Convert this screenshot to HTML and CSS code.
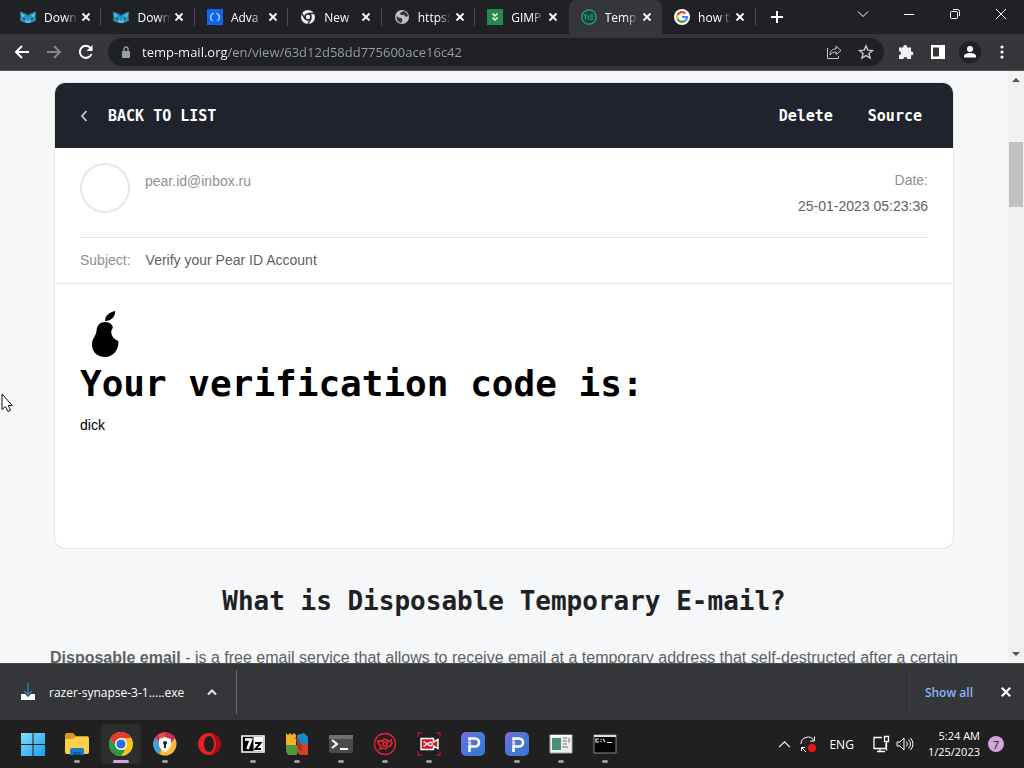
FILE: index.html
```html
<!DOCTYPE html>
<html lang="en">
<head>
    <meta charset="UTF-8">
    <meta name="viewport" content="width=device-width, initial-scale=1.0">
    <title>Temp Mail - Verify your Pear ID Account</title>
    <link rel="stylesheet" href="styles.css">
</head>
<body>
    <!-- Shared icons -->
    <svg class="sprite" aria-hidden="true">
        <symbol id="x" viewBox="0 0 10 10"><path d="M1.5 1.5l7 7m0-7l-7 7" stroke="currentColor" stroke-width="1.8" fill="none"/></symbol>
        <symbol id="panda" viewBox="0 0 16 16">
            <path d="M0 2.500l4 1.500 2 1h4l2-1 4-1.500-.5 6 .5 3-4 2H4l-4-2 .5-3z" fill="#2595bd"/>
            <path d="M1 4l4 3-3 1zm14 0l-4 3 3 1zM5 9l3 4 3-4-1 5H6z" fill="#66c8e6"/>
            <path d="M3 9l3 1-2 1zm10 0l-3 1 2 1zM6 5l2 2 2-2z" fill="#153d50"/>
        </symbol>
        <symbol id="p-app" viewBox="0 0 24 24">
            <defs><linearGradient id="pg" x1="0" y1="0" x2="1" y2="1"><stop offset="0" stop-color="#7b6bdc"/><stop offset=".5" stop-color="#4878da"/><stop offset="1" stop-color="#2f78d0"/></linearGradient></defs>
            <rect width="24" height="24" rx="5" fill="url(#pg)"/>
            <path d="M8.500 20V6.500H14a4 4 0 0 1 0 8H9" stroke="#fff" stroke-width="2.600" fill="none"/>
            <path d="M6 9h4M6 12h3" stroke="#4c78d8" stroke-width="1"/>
        </symbol>
    </svg>

    <header class="tabbar">
        <div class="tabs">
            <div class="tab">
                <svg class="favicon"><use href="#panda"/></svg>
                <button class="tab-title">Down</button>
                <button class="tab-close" aria-label="Close tab"><svg><use href="#x"/></svg></button>
            </div>
            <div class="tab">
                <svg class="favicon"><use href="#panda"/></svg>
                <button class="tab-title">Down</button>
                <button class="tab-close" aria-label="Close tab"><svg><use href="#x"/></svg></button>
            </div>
            <div class="tab">
                <svg class="favicon" viewBox="0 0 16 16"><rect width="16" height="16" fill="#1662f0"/><path d="M6.500 4Q1 8 5.500 12M9.500 4Q15 8 10.500 12" stroke="#b8e2ff" stroke-width="1.300" fill="none"/></svg>
                <button class="tab-title">Adva</button>
                <button class="tab-close" aria-label="Close tab"><svg><use href="#x"/></svg></button>
            </div>
            <div class="tab">
                <svg class="favicon" viewBox="0 0 16 16"><circle cx="8" cy="8" r="7" fill="#f1f1f1"/><path d="M8 4.500h6.500M5 9.800L1.800 4.300M11 9.800L7.800 15" stroke="#202124" stroke-width="1.300"/><circle cx="8" cy="8" r="3" fill="#f1f1f1" stroke="#202124" stroke-width="1.500"/></svg>
                <button class="tab-title">New</button>
                <button class="tab-close" aria-label="Close tab"><svg><use href="#x"/></svg></button>
            </div>
            <div class="tab">
                <svg class="favicon" viewBox="0 0 16 16"><circle cx="8" cy="8" r="7" fill="#bdc1c6"/><path d="M2.500 7l3 2h2l1 2-1 3c-4-1-5-3.500-5-7zM7 3l3-1c2 1 4 3 4 5l-2 1-2-2H7L6 5z" fill="#34363a"/></svg>
                <button class="tab-title">https:</button>
                <button class="tab-close" aria-label="Close tab"><svg><use href="#x"/></svg></button>
            </div>
            <div class="tab">
                <svg class="favicon" viewBox="0 0 16 16"><rect width="16" height="16" fill="#258a4d"/><path d="M5.500 4.500L8 7l2.500-2.500M5.500 8.500L8 11l2.500-2.500" stroke="#fff" stroke-width="1.500" fill="none"/></svg>
                <button class="tab-title">GIMP</button>
                <button class="tab-close" aria-label="Close tab"><svg><use href="#x"/></svg></button>
            </div>
            <div class="tab tab-active">
                <svg class="favicon" viewBox="0 0 16 16"><circle cx="8" cy="8" r="7.200" fill="#20403f" stroke="#1fae92" stroke-width="1.200"/><path d="M3 6h3M4.500 6v4.500M7.500 10.500v-4M9 8h3M9 6h3M9 10.500h3" stroke="#1fae92" stroke-width="1.200"/></svg>
                <button class="tab-title">Temp</button>
                <button class="tab-close" aria-label="Close tab"><svg><use href="#x"/></svg></button>
            </div>
            <div class="tab">
                <svg class="favicon" viewBox="0 0 16 16"><circle cx="8" cy="8" r="8" fill="#fff"/><g fill="none" stroke-width="2.200"><path d="M11.500 4.500A5 5 0 0 0 3.500 6" stroke="#ea4335"/><path d="M3.500 6a5 5 0 0 0 0 4" stroke="#fbbc05"/><path d="M3.500 10a5 5 0 0 0 8 1.500" stroke="#34a853"/><path d="M11.500 11.500A5 5 0 0 0 13 8H8" stroke="#4285f4"/></g></svg>
                <button class="tab-title">how t</button>
                <button class="tab-close" aria-label="Close tab"><svg><use href="#x"/></svg></button>
            </div>
        </div>
        <button class="new-tab" aria-label="New tab"><svg viewBox="0 0 12 12"><path d="M6 0v12M0 6h12" stroke="#fff" stroke-width="2"/></svg></button>
        <div class="window-buttons">
            <button aria-label="Search tabs"><svg viewBox="0 0 12 12"><path d="M1 3.500l5 5 5-5"/></svg></button>
            <button aria-label="Minimize"><svg viewBox="0 0 12 12"><path d="M1 6.500h10"/></svg></button>
            <button aria-label="Restore"><svg viewBox="0 0 12 12"><rect x="1.500" y="3.500" width="7" height="7" rx="1"/><path d="M4 1.500h4.500a2 2 0 0 1 2 2V8"/></svg></button>
            <button aria-label="Close"><svg viewBox="0 0 12 12"><path d="M1 1l10 10m0-10L1 11"/></svg></button>
        </div>
    </header>

    <nav class="toolbar">
        <button class="nav-button" aria-label="Back"><svg viewBox="0 0 16 16"><path d="M15 8H2m6-6L2 8l6 6"/></svg></button>
        <button class="nav-button disabled" aria-label="Forward"><svg viewBox="0 0 16 16"><path d="M1 8h13M8 2l6 6-6 6"/></svg></button>
        <button class="nav-button" aria-label="Reload"><svg viewBox="0 0 16 16"><path d="M13.500 10A6 6 0 1 1 12.500 4"/><path d="M14.500 1v6h-6z" fill="#fff" stroke="none"/></svg></button>
        <div class="omnibox">
            <svg class="lock" viewBox="0 0 10 12"><rect x="1" y="5" width="8" height="7" rx="1" fill="#9aa0a6"/><path d="M3 5V3a2 2 0 0 1 4 0v2" stroke="#9aa0a6" stroke-width="1.300" fill="none"/></svg>
            <input class="url" type="text" aria-label="Address" value="temp-mail.org/en/view/63d12d58dd775600ace16c42">
            <button aria-label="Share"><svg viewBox="0 0 16 16"><path d="M1.500 4v10.500h11V12M4 11c0-4 2-6 6-6V2l5 4.500-5 4V8c-3 0-4.500 1-6 3z"/></svg></button>
            <button aria-label="Bookmark"><svg viewBox="0 0 16 16"><path d="M8 1.800l1.800 4.300 4.700.4-3.600 3 1.200 4.600L8 11.600l-4.100 2.500 1.200-4.600-3.600-3 4.700-.4z" stroke-width="1.400"/></svg></button>
        </div>
        <div class="toolbar-end">
            <button aria-label="Extensions"><svg viewBox="0 0 16 16"><path d="M1 3.500h4.200V3a2 2 0 0 1 4 0v.5H13v4h.5a1.900 1.900 0 0 1 0 3.800H13V15H9.200v-.5a1.900 1.900 0 0 0-3.700 0v.5H1v-4h.5a1.900 1.900 0 0 0 0-3.700H1z" fill="#f1f3f4"/></svg></button>
            <button aria-label="Side panel"><svg viewBox="0 0 16 16"><path d="M1 1h14v14H1zM3 3.500v9h6v-9z" fill="#fff" fill-rule="evenodd"/></svg></button>
            <button class="profile" aria-label="Profile"><svg viewBox="0 0 16 16"><circle cx="8" cy="5" r="3" fill="#fff"/><path d="M2 13.500V12c0-2 3.500-3 6-3s6 1 6 3v1.500z" fill="#fff"/></svg></button>
            <button aria-label="Menu"><svg viewBox="0 0 16 16"><g fill="#fff"><circle cx="8" cy="3" r="1.600"/><circle cx="8" cy="8" r="1.600"/><circle cx="8" cy="13" r="1.600"/></g></svg></button>
        </div>
    </nav>

    <div class="viewport">
        <main class="page">
            <article class="mail">
                <div class="mail-bar">
                    <a class="back" href="#"><svg viewBox="0 0 8 12"><path d="M6.500 1L2 6l4.500 5" stroke="#c8cad0" stroke-width="1.800" fill="none"/></svg>BACK TO LIST</a>
                    <div class="mail-actions">
                        <a href="#">Delete</a>
                        <a href="#">Source</a>
                    </div>
                </div>
                <div class="mail-from">
                    <span class="avatar"></span>
                    <span class="sender">pear.id@inbox.ru</span>
                    <div class="date"><span class="muted">Date:</span><span>25-01-2023 05:23:36</span></div>
                </div>
                <div class="mail-subject"><span class="muted">Subject:</span><span>Verify your Pear ID Account</span></div>
                <div class="mail-body">
                    <svg class="pear" viewBox="0 0 50 50"><path d="M25 12c5 0 8 3 7.800 6-3 3-2 10 5.600 13C39 40 33 47 25 47S11.500 41 12 34c.3-6 4-8 4.500-13C17 15 20 12 25 12z"/><path d="M25 11C25 5 30 2 35 1c1 5-4 10-10 10z"/></svg>
                    <h1>Your verification code is:</h1>
                    <p>dick</p>
                </div>
            </article>
            <h2>What is Disposable Temporary E-mail?</h2>
            <p class="intro"><b>Disposable email</b> - is a free email service that allows to receive email at a temporary address that self-destructed after a certain</p>
        </main>
        <div class="scrollbar">
            <svg viewBox="0 0 8 4"><path d="M0 4l4-4 4 4z"/></svg>
            <div class="track"><div class="thumb"></div></div>
            <svg viewBox="0 0 8 4"><path d="M0 0l4 4 4-4z"/></svg>
        </div>
        <svg class="cursor" viewBox="0 0 12 20"><path d="M1.500 1v15.500l3.500-3 2.500 5 2.500-1.200L7.800 12.500h4z" fill="#fff" stroke="#111" stroke-width="1"/></svg>
    </div>

    <div class="shelf">
        <button class="download">
            <svg class="download-icon" viewBox="0 0 16 18"><path d="M1 11h4l3 3 3-3h4v6H1z" fill="#fff"/><path d="M8 0v12M4 8l4 4 4-4" stroke="#28849c" stroke-width="1.500" fill="none"/></svg>
            razer-synapse-3-1.....exe
        </button>
        <button class="download-menu" aria-label="Download options"><svg viewBox="0 0 12 12"><path d="M2 8.500l4-4 4 4" stroke="#e8eaed" stroke-width="2" fill="none"/></svg></button>
        <a class="show-all" href="#">Show all</a>
        <button class="shelf-close" aria-label="Close downloads"><svg><use href="#x"/></svg></button>
    </div>

    <footer class="taskbar">
        <div class="apps">
            <button aria-label="Start"><svg viewBox="0 0 24 24"><defs><linearGradient id="win" x1="0" y1="0" x2="1" y2="1"><stop offset="0" stop-color="#86dcfb"/><stop offset="1" stop-color="#16a0ee"/></linearGradient></defs><path d="M0 1h11.500v11H0zM12.500 1H24v11H12.500zM0 13h11.500v11H0zM12.500 13H24v11H12.500z" fill="url(#win)"/></svg></button>
            <button class="running" aria-label="File Explorer"><svg viewBox="0 0 24 24"><path d="M0 3a2 2 0 0 1 2-2h6l3 3h11a2 2 0 0 1 2 2v4H0z" fill="#d99a18"/><path d="M0 7h8l2-2h12a2 2 0 0 1 2 2v13a2 2 0 0 1-2 2H2a2 2 0 0 1-2-2z" fill="#fbcf4b"/><path d="M5 23v-5a2 2 0 0 1 2-2h10a2 2 0 0 1 2 2v5z" fill="#1c79c7"/><path d="M8 20h8v3H8z" fill="#125996"/></svg></button>
            <button class="running current" aria-label="Chrome"><svg viewBox="0 0 24 24"><circle cx="12" cy="12" r="12" fill="#fbc116"/><path d="M1.600 6A12 12 0 0 1 22.400 6H12L7 15z" fill="#e33b2e"/><path d="M1.600 6L7 15l5 3h4l-4 6A12 12 0 0 1 1.600 6z" fill="#259b48"/><circle cx="12" cy="12" r="6" fill="#fff"/><circle cx="12" cy="12" r="4.600" fill="#2872e0"/></svg></button>
            <button class="running" aria-label="Secure browser"><svg viewBox="0 0 24 24"><circle cx="12" cy="12" r="11.500" fill="#f5bd37"/><path d="M2 6A11.500 11.500 0 0 1 22 6l-5 6H7z" fill="#cf285c"/><path d="M2 6a11.500 11.500 0 0 0 5 16.500L9 12z" fill="#42a3e2"/><path d="M5 2.800L12 .5v6L6 8z" fill="#e8522d"/><path d="M12 5l6 2v5c0 4-3 6-6 8-3-2-6-4-6-8V7z" fill="#fff"/><circle cx="12" cy="11" r="2" fill="#222"/><path d="M11 12h2v4h-2z" fill="#222"/></svg></button>
            <button aria-label="Opera"><svg viewBox="0 0 24 24"><path d="M12 1a11 11 0 1 0 0 22 11 11 0 0 0 0-22zm0 3c3 0 5 3.500 5 8s-2 8-5 8-5-3.500-5-8 2-8 5-8z" fill="#e5202d" fill-rule="evenodd"/><path d="M13 1a11 11 0 0 1 0 22c8-4 8-18 0-22z" fill="#a70d18"/></svg></button>
            <button class="running" aria-label="7-Zip"><svg viewBox="0 0 24 24"><path d="M1 4h22v16H1z" fill="#000" stroke="#fff" stroke-width="1.600"/><path d="M12.500 5H22v14h-9.500z" fill="#fff"/><path d="M4 7.500h6L6.500 17" stroke="#fff" stroke-width="2.500" fill="none"/><path d="M14 11h5.500L14.500 17H20" stroke="#000" stroke-width="2" fill="none"/></svg></button>
            <button class="running" aria-label="Archive tool"><svg viewBox="0 0 24 24"><path d="M1 1l2 2 2-2 2 2 2-2 2 2v10H1z" fill="#f4b027"/><path d="M12 3l7-2 4 4v7H12z" fill="#1789cb"/><path d="M1 13h11v10H3l-2-4z" fill="#4b9b37"/><path d="M12 12h11v11h-8l-3-3z" fill="#d34226"/><path d="M9 5q8 2 8 15-4-2-5-8T9 5z" fill="#9a3824"/></svg></button>
            <button class="running" aria-label="Terminal"><svg viewBox="0 0 24 24"><rect y="3" width="24" height="18" rx="2" fill="#4a4a4c"/><path d="M0 3h24v4H0z" fill="#707074"/><path d="M3 8l5 4-5 4M11 17h8" stroke="#fff" stroke-width="2" fill="none"/></svg></button>
            <button class="running" aria-label="Recorder"><svg viewBox="0 0 24 24"><g fill="none" stroke="#e02332"><circle cx="12" cy="12" r="10.500" stroke-width="1.300"/><path d="M5 9h5l1-2 3 1 1 2 3-2 1 3-2 3-3 1-1 2-3-1-3 1 1-3-2-1z" stroke-width="1.800"/><circle cx="12" cy="12" r="2" stroke-width="1.600"/></g></svg></button>
            <button class="running" aria-label="Screen capture"><svg viewBox="0 0 24 24"><path d="M1 5V1h4M19 1h4v4M23 19v4h-4M5 23H1v-4" stroke="#a81822" stroke-width="1.300" fill="none"/><path d="M4 6.500h12.500V10L21 7.500v9L16.500 14v3.500H4z" fill="#ce1f30" stroke="#fff" stroke-width="1.400"/><path d="M6.500 9.500l6 4a1.800 1.800 0 1 0 0-3l-6 4" fill="none" stroke="#fff" stroke-width="1.200"/></svg></button>
            <button aria-label="P app"><svg><use href="#p-app"/></svg></button>
            <button class="running" aria-label="P app window"><svg><use href="#p-app"/></svg></button>
            <button class="running" aria-label="Registry viewer"><svg viewBox="0 0 24 24"><path d="M1 3h22v18H1z" fill="#eee" stroke="#aaa"/><path d="M3 6h9v12H3z" fill="#4b8f79"/><path d="M14 6h4M14 9h4M14 12h4M13 15h6M20 6v5" stroke="#777"/><path d="M1 4h22" stroke="#fff" stroke-width="2"/></svg></button>
            <button class="running" aria-label="Command Prompt"><svg viewBox="0 0 24 24"><path d="M1 3h22v18H1z" fill="#050505" stroke="#888"/><path d="M1 4h22" stroke="#ddd" stroke-width="2"/><path d="M6 7H3v3h3M8 7v1m0 1v1M10 7l2 3M14 10.500h5" stroke="#eee" stroke-width="1.200" fill="none"/></svg></button>
        </div>
        <div class="tray">
            <button aria-label="Hidden icons"><svg class="small" viewBox="0 0 12 12"><path d="M1 8.500l5-5 5 5"/></svg></button>
            <button aria-label="Updates"><svg viewBox="0 0 18 18"><path d="M2 9a7 7 0 0 1 13-3.500M15.500 1.500v4.500H11M6 12.500H2.500V16M2.500 12.500L7 17"/><circle cx="13" cy="13" r="4" fill="#f01414" stroke="none"/></svg></button>
            <button class="lang">ENG</button>
            <button class="system" aria-label="Network and volume">
                <svg viewBox="0 0 18 18"><path d="M10 2.500H2v11h12V8M5 16.500h8M8 13.500v3M12.500 1.500h4v5h-4zM14.500 6.500v9" stroke-width="1.300"/></svg>
                <svg viewBox="0 0 18 18"><path d="M1 7v4h3l4 4V3L4 7zM10.500 6.500q2 2.500 0 5M12.500 4.500q4 4.500 0 9M14.500 3q5 6 0 12"/></svg>
            </button>
            <button class="clock"><span>5:24 AM</span><span>1/25/2023</span></button>
            <button class="badge" aria-label="7 notifications">7</button>
        </div>
    </footer>
</body>
</html>
```

FILE: styles.css
```css
* {
    box-sizing: border-box;
}

body {
    margin: 0;
    height: 100vh;
    display: flex;
    flex-direction: column;
    overflow: hidden;
    font-family: "Open Sans", "Noto Sans", sans-serif;
    font-size: 12px;
    color: #fff;
    background: #f5f7f9;
}

button {
    border: none;
    padding: 0;
    background: none;
    color: inherit;
    font: inherit;
    display: flex;
    align-items: center;
    justify-content: center;
}

a {
    color: inherit;
    text-decoration: none;
}

svg {
    display: block;
    flex-shrink: 0;
}

.sprite {
    position: absolute;
    width: 0;
    height: 0;
}

/* Tabs */
.tabbar {
    display: flex;
    height: 34px;
    background: #202124;
}

.tabs {
    display: flex;
    width: 73%;
    margin-left: 8px;
}

.tab {
    flex: 1;
    min-width: 0;
    display: flex;
    align-items: center;
    padding-left: 12px;
    background: linear-gradient(#4a4c50, #4a4c50) no-repeat right center / 1px 18px;
}

.tab:has(+ .tab-active) {
    background: none;
}

.tab-active {
    background: #35363a;
    border-radius: 8px 8px 0 0;
}

.favicon {
    width: 16px;
    height: 16px;
}

.tab-title {
    width: 34px;
    margin-left: 8px;
    overflow: hidden;
    justify-content: flex-start;
    white-space: nowrap;
    mask-image: linear-gradient(to right, #000 60%, transparent);
}

.tab-close {
    width: 16px;
    height: 16px;
}

.tab-close svg {
    width: 10px;
    height: 10px;
}

.new-tab {
    width: 42px;
}

.new-tab svg {
    width: 12px;
    height: 12px;
}

.window-buttons {
    display: flex;
    flex: 1;
    justify-content: flex-end;
    height: 28px;
}

.window-buttons button {
    width: 46px;
}

.window-buttons svg {
    width: 12px;
    height: 12px;
    fill: none;
    stroke: #fff;
}

/* Toolbar */
.toolbar {
    display: flex;
    align-items: center;
    height: 37px;
    padding-left: 6px;
    background: #35363a;
    border-bottom: 1px solid #55565a;
}

.nav-button {
    width: 32px;
    height: 32px;
}

.nav-button svg {
    width: 16px;
    height: 16px;
    fill: none;
    stroke: #fff;
    stroke-width: 2;
}

.nav-button.disabled svg {
    stroke: #85878b;
}

.omnibox {
    flex: 1;
    display: flex;
    align-items: center;
    height: 28px;
    margin-left: 6px;
    padding: 0 2px 0 13px;
    border-radius: 14px;
    background: #202124;
}

.lock {
    width: 10px;
    height: 12px;
}

.url {
    flex: 1;
    min-width: 0;
    border: none;
    outline: none;
    padding: 0;
    margin-left: 11px;
    font-family: inherit;
    font-size: 13px;
    /* domain in white, path in grey */
    background: linear-gradient(to right, #fff 86px, #9aa0a6 86px);
    background-clip: text;
    -webkit-text-fill-color: transparent;
}

.omnibox button {
    width: 32px;
}

.omnibox button svg {
    width: 16px;
    height: 16px;
    fill: none;
    stroke: #c4c7cb;
}

.toolbar-end {
    display: flex;
    align-items: center;
    gap: 10px;
    margin: 0 11px;
}

.toolbar-end button {
    width: 22px;
    height: 22px;
    border-radius: 11px;
}

.toolbar-end svg {
    width: 16px;
    height: 16px;
}

.profile {
    background: #202124;
}

/* Page */
.viewport {
    flex: 1;
    min-height: 0;
    display: flex;
    position: relative;
    font-family: "Liberation Sans", Arial, sans-serif;
    color: #5d6164;
}

.page {
    flex: 1;
    min-width: 0;
    padding: 12px 55px 0;
    overflow: hidden;
}

.mail {
    border-radius: 10px;
    background: #fff;
    box-shadow: 0 0 0 1px #e4e6ea;
    font-size: 14px;
    overflow: hidden;
}

.mail-bar {
    display: flex;
    align-items: center;
    justify-content: space-between;
    height: 65px;
    padding: 0 31px 0 25px;
    background: #20232c;
    color: #fff;
    font-family: "DejaVu Sans Mono", monospace;
    font-size: 15px;
    font-weight: bold;
}

.back {
    display: flex;
    align-items: center;
    gap: 20px;
}

.back svg {
    width: 8px;
    height: 14px;
}

.mail-actions {
    display: flex;
    gap: 35px;
}

.mail-from {
    display: flex;
    height: 90px;
    margin: 0 25px;
    padding-top: 15px;
    border-bottom: 1px solid #e8e8ec;
}

.avatar {
    width: 50px;
    height: 50px;
    border: 2px solid #e6e5ec;
    border-radius: 50%;
}

.sender {
    margin: 10px 0 0 15px;
    color: #8e9194;
}

.date {
    display: flex;
    flex-direction: column;
    flex: 1;
    align-items: flex-end;
    line-height: 26px;
    padding-top: 4px;
}

.muted {
    color: #8e9194;
}

.mail-subject {
    display: flex;
    gap: 15px;
    padding: 0 25px;
    line-height: 45px;
    border-bottom: 1px solid #e8e8ec;
}

.mail-body {
    height: 264px;
    padding: 26px 25px;
    color: #000;
}

.pear {
    width: 50px;
    height: 50px;
}

.mail-body h1 {
    margin: 0;
    font-family: "DejaVu Sans Mono", monospace;
    font-size: 36px;
    line-height: 48px;
}

.mail-body p {
    margin: 9px 0;
}

.page h2 {
    margin: 36px 0 0;
    text-align: center;
    font-family: "DejaVu Sans Mono", monospace;
    font-size: 26px;
    line-height: 34px;
    color: #202124;
}

.intro {
    margin: 28px -20px 0;
    text-align: center;
    white-space: nowrap;
    font-size: 16px;
    line-height: 24px;
}

.scrollbar {
    width: 16px;
    display: flex;
    flex-direction: column;
    align-items: center;
    padding: 7px 0;
    background: #f1f1f1;
}

.scrollbar svg {
    width: 8px;
    height: 4px;
    fill: #505050;
}

.track {
    flex: 1;
    width: 14px;
    padding-top: 60px;
}

.thumb {
    height: 65px;
    background: #c1c1c1;
}

.cursor {
    position: absolute;
    left: 0;
    top: 322px;
    width: 13px;
    height: 20px;
}

/* Download shelf */
.shelf {
    display: flex;
    align-items: center;
    height: 57px;
    padding-left: 20px;
    background: #35363a;
    border-top: 1px solid #4a4b4f;
}

.download {
    gap: 13px;
}

.download-icon {
    width: 16px;
    height: 18px;
}

.download-menu {
    height: 44px;
    width: 49px;
    margin-left: 4px;
    border-right: 1px solid #6a6b6e;
}

.download-menu svg {
    width: 12px;
    height: 12px;
}

.show-all {
    margin-left: auto;
    padding: 12px 15px;
    border-left: 1px solid #3f4044;
    color: #8ab4f8;
    font-weight: 600;
}

.shelf-close {
    width: 36px;
    height: 32px;
}

.shelf-close svg {
    width: 12px;
    height: 12px;
}

/* Taskbar */
.taskbar {
    display: flex;
    align-items: center;
    justify-content: space-between;
    height: 48px;
    padding: 0 20px 0 13px;
    background: #202020;
}

.apps {
    display: flex;
    gap: 4px;
}

.apps button {
    width: 40px;
    height: 40px;
    border-radius: 4px;
    position: relative;
}

.apps svg {
    width: 24px;
    height: 24px;
}

.apps .current {
    background: #2d2d2d;
}

.running::after {
    content: "";
    position: absolute;
    bottom: 1px;
    width: 6px;
    height: 3px;
    border-radius: 2px;
    background: #9a9a9a;
}

.current::after {
    width: 16px;
    background: #d2a5dc;
}

.tray {
    display: flex;
    align-items: center;
    gap: 8px;
}

.tray svg {
    width: 18px;
    height: 18px;
    fill: none;
    stroke: #fff;
}

.tray .small {
    width: 13px;
    height: 13px;
}

.lang {
    margin: 0 10px 0 4px;
}

.system {
    gap: 6px;
    margin-right: 6px;
}

.clock {
    flex-direction: column;
    align-items: flex-end;
    font-size: 11px;
    line-height: 16px;
}

.badge {
    width: 16px;
    height: 16px;
    border-radius: 50%;
    background: #d2a5dc;
    color: #222;
    font-size: 11px;
}
```
